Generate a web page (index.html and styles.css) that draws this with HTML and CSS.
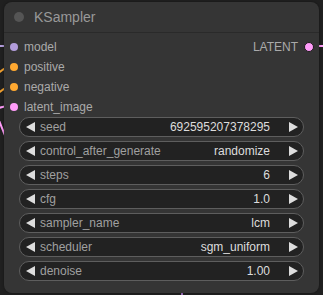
FILE: index.html
```html
<!DOCTYPE html>
<html>
<head>
<meta charset="utf-8">
<link rel="stylesheet" href="styles.css">
</head>
<body>
<div class="canvas">
  <svg class="wires" width="323" height="295" viewBox="0 0 323 295">
    <path d="M-4 46 L10 46" stroke="#b39ddb" stroke-width="2" fill="none"/>
    <path d="M-6 76 C0 72 4 68 10 66" stroke="#f0a030" stroke-width="2" fill="none"/>
    <path d="M-6 96 C0 92 4 88 10 86" stroke="#f0a030" stroke-width="2" fill="none"/>
    <path d="M10 106 C-2 106 -4 110 -6 112" stroke="#ff9cf9" stroke-width="2" fill="none"/>
    <path d="M-2 118 L6 138" stroke="#ff9cf9" stroke-width="2" fill="none"/>
    <path d="M310 46 L326 46" stroke="#ff9cf9" stroke-width="2" fill="none"/>
    <path d="M182 290 L182 298" stroke="#a070c0" stroke-width="2" fill="none"/>
  </svg>
  <div class="node">
    <div class="title">
      <span class="title-dot"></span>
      <span class="title-text">KSampler</span>
    </div>
    <div class="slots">
      <div class="slot-row">
        <div class="slot-in"><span class="dot dot-model"></span><span class="slot-label">model</span></div>
        <div class="slot-out"><span class="slot-label">LATENT</span><span class="dot dot-out"></span></div>
      </div>
      <div class="slot-row">
        <div class="slot-in"><span class="dot dot-cond"></span><span class="slot-label">positive</span></div>
      </div>
      <div class="slot-row">
        <div class="slot-in"><span class="dot dot-cond"></span><span class="slot-label">negative</span></div>
      </div>
      <div class="slot-row">
        <div class="slot-in"><span class="dot dot-latent"></span><span class="slot-label">latent_image</span></div>
      </div>
    </div>
    <div class="widgets">
      <div class="widget"><svg class="arrow" width="9" height="10" viewBox="0 0 9 10"><path d="M0 5 L9 0 L9 10 Z"/></svg><span class="w-label">seed</span><span class="w-value">692595207378295</span><svg class="arrow" width="9" height="10" viewBox="0 0 9 10"><path d="M9 5 L0 0 L0 10 Z"/></svg></div>
      <div class="widget"><svg class="arrow" width="9" height="10" viewBox="0 0 9 10"><path d="M0 5 L9 0 L9 10 Z"/></svg><span class="w-label">control_after_generate</span><span class="w-value">randomize</span><svg class="arrow" width="9" height="10" viewBox="0 0 9 10"><path d="M9 5 L0 0 L0 10 Z"/></svg></div>
      <div class="widget"><svg class="arrow" width="9" height="10" viewBox="0 0 9 10"><path d="M0 5 L9 0 L9 10 Z"/></svg><span class="w-label">steps</span><span class="w-value">6</span><svg class="arrow" width="9" height="10" viewBox="0 0 9 10"><path d="M9 5 L0 0 L0 10 Z"/></svg></div>
      <div class="widget"><svg class="arrow" width="9" height="10" viewBox="0 0 9 10"><path d="M0 5 L9 0 L9 10 Z"/></svg><span class="w-label">cfg</span><span class="w-value">1.0</span><svg class="arrow" width="9" height="10" viewBox="0 0 9 10"><path d="M9 5 L0 0 L0 10 Z"/></svg></div>
      <div class="widget"><svg class="arrow" width="9" height="10" viewBox="0 0 9 10"><path d="M0 5 L9 0 L9 10 Z"/></svg><span class="w-label">sampler_name</span><span class="w-value">lcm</span><svg class="arrow" width="9" height="10" viewBox="0 0 9 10"><path d="M9 5 L0 0 L0 10 Z"/></svg></div>
      <div class="widget"><svg class="arrow" width="9" height="10" viewBox="0 0 9 10"><path d="M0 5 L9 0 L9 10 Z"/></svg><span class="w-label">scheduler</span><span class="w-value">sgm_uniform</span><svg class="arrow" width="9" height="10" viewBox="0 0 9 10"><path d="M9 5 L0 0 L0 10 Z"/></svg></div>
      <div class="widget"><svg class="arrow" width="9" height="10" viewBox="0 0 9 10"><path d="M0 5 L9 0 L9 10 Z"/></svg><span class="w-label">denoise</span><span class="w-value">1.00</span><svg class="arrow" width="9" height="10" viewBox="0 0 9 10"><path d="M9 5 L0 0 L0 10 Z"/></svg></div>
    </div>
  </div>
</div>
</body>
</html>
```

FILE: styles.css
```css
* { box-sizing: border-box; }
html, body { margin: 0; padding: 0; background: #202020; }
body { font-family: "Liberation Sans", Arial, sans-serif; }

.canvas {
  position: relative;
  width: 323px;
  height: 295px;
  overflow: hidden;
  background-color: #202020;
  padding: 2px 0 0 4px;
}

.wires {
  position: absolute;
  left: 0;
  top: 0;
}

.node {
  position: relative;
  width: 315px;
  height: 291px;
  background: #353535;
  border-radius: 8px;
  display: flex;
  flex-direction: column;
  box-shadow: 0 0 3px rgba(0,0,0,0.4);
}

.title {
  height: 31px;
  border-bottom: 1px solid #2a2a2a;
  display: flex;
  align-items: center;
  padding-left: 10px;
}
.title-dot {
  width: 10px;
  height: 10px;
  border-radius: 50%;
  background: #555;
}
.title-text {
  margin-left: 10px;
  font-size: 14px;
  color: #999;
}

.slots {
  padding-top: 4px;
  display: flex;
  flex-direction: column;
}
.slot-row {
  height: 20px;
  display: flex;
  align-items: center;
  justify-content: space-between;
}
.slot-in, .slot-out {
  display: flex;
  align-items: center;
}
.slot-in { padding-left: 6px; }
.slot-out { padding-right: 5px; }
.slot-label {
  font-size: 12px;
  color: #aaa;
}
.slot-in .slot-label { margin-left: 6px; }
.slot-out .slot-label { margin-right: 6px; }

.dot {
  width: 8px;
  height: 8px;
  border-radius: 50%;
  display: inline-block;
}
.dot-model { background: #b39ddb; }
.dot-cond { background: #ffa931; }
.dot-latent { background: #ff9cf9; }
.dot-out {
  width: 10px;
  height: 10px;
  background: #ff9cf9;
  border: 1.5px solid #1a1a1a;
}

.widgets {
  padding: 0 15px 0 15px;
  display: flex;
  flex-direction: column;
  gap: 4px;
}
.widget {
  height: 20px;
  background: #222;
  border: 1px solid #5e5e5e;
  border-radius: 10px;
  display: flex;
  align-items: center;
  padding: 0 5px 0 6px;
  font-size: 12px;
}
.arrow { fill: #ddd; flex: none; }
.w-label {
  color: #a0a0a0;
  margin-left: 5px;
  flex: 1;
  white-space: nowrap;
}
.w-value {
  color: #ddd;
  margin-right: 19px;
  white-space: nowrap;
}
```
